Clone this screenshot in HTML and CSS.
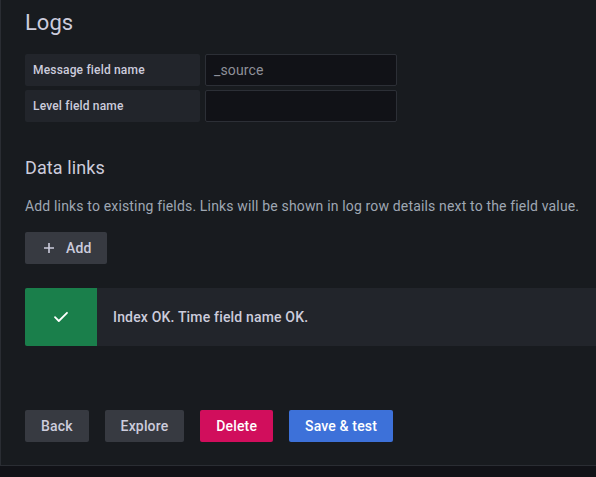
FILE: index.html
```html
<!DOCTYPE html>
<html>
<head>
<meta charset="utf-8">
<link rel="stylesheet" href="styles.css">
</head>
<body>
<div class="panel">
  <h3 class="title">Logs</h3>
  <div class="rows">
    <div class="row">
      <label class="label">Message field name</label>
      <div class="input"><span class="placeholder">_source</span></div>
    </div>
    <div class="row">
      <label class="label">Level field name</label>
      <div class="input"></div>
    </div>
  </div>

  <h4 class="subtitle">Data links</h4>
  <p class="desc">Add links to existing fields. Links will be shown in log row details next to the field value.</p>
  <button class="btn btn-secondary btn-add">
    <svg class="plus" width="12" height="12" viewBox="0 0 12 12"><path d="M6 1v10M1 6h10" stroke="#ccccdc" stroke-width="1.6" fill="none"/></svg>
    <span>Add</span>
  </button>

  <div class="alert">
    <div class="alert-icon">
      <svg width="16" height="12" viewBox="0 0 16 12"><path d="M2 6.2l3.8 3.8L14 1.8" stroke="#ffffff" stroke-width="1.8" fill="none" stroke-linecap="round" stroke-linejoin="round"/></svg>
    </div>
    <div class="alert-text">Index OK. Time field name OK.</div>
  </div>

  <div class="actions">
    <button class="btn btn-secondary">Back</button>
    <button class="btn btn-secondary">Explore</button>
    <button class="btn btn-danger">Delete</button>
    <button class="btn btn-primary">Save &amp; test</button>
  </div>
</div>
</body>
</html>
```

FILE: styles.css
```css
html, body {
  margin: 0;
  padding: 0;
  background: #111217;
  overflow: hidden;
  width: 596px;
  height: 477px;
}
body {
  font-family: Roboto, "Liberation Sans", sans-serif;
  color: #ccccdc;
}
.panel {
  width: 700px;
  height: 466px;
  box-sizing: border-box;
  background: #181b1f;
  border-left: 1px solid #2a2d33;
  border-bottom: 1px solid #2a2d33;
  padding: 0 0 0 24px;
}
.title {
  margin: 0;
  padding-top: 9px;
  font-size: 22px;
  font-weight: 400;
  line-height: 28px;
  height: 45px;
  color: #ccccdc;
}
.rows {
  display: flex;
  flex-direction: column;
  gap: 4px;
}
.row {
  display: flex;
  gap: 5px;
}
.label {
  width: 175px;
  height: 32px;
  box-sizing: border-box;
  background: #22252b;
  border-radius: 2px;
  padding: 0 8px;
  display: flex;
  align-items: center;
  font-size: 12px;
  font-weight: 500;
  letter-spacing: 0.18px;
  color: #ccccdc;
}
.input {
  width: 192px;
  height: 32px;
  box-sizing: border-box;
  background: #111217;
  border: 1px solid #2c2f36;
  border-radius: 2px;
  padding: 0 8px;
  display: flex;
  align-items: center;
  font-size: 14px;
  letter-spacing: 0.15px;
}
.placeholder {
  color: #8e9099;
}
.subtitle {
  margin: 0;
  margin-top: 35px;
  font-size: 18px;
  font-weight: 400;
  line-height: 22px;
  letter-spacing: 0.1px;
  color: #ccccdc;
}
.desc {
  margin: 0;
  margin-top: 17px;
  font-size: 14px;
  line-height: 20px;
  letter-spacing: 0.16px;
  color: #9fa7b3;
}
.btn {
  height: 32px;
  border: none;
  border-radius: 2px;
  padding: 0 16px;
  font-family: Roboto, "Liberation Sans", sans-serif;
  font-size: 14px;
  font-weight: 500;
  letter-spacing: 0.15px;
  display: inline-flex;
  align-items: center;
  gap: 10px;
}
.btn-secondary {
  background: #373a41;
  color: #ccccdc;
}
.btn-danger {
  background: #d10e5c;
  color: #ffffff;
}
.btn-primary {
  background: #3d71d9;
  color: #ffffff;
}
.btn-add {
  margin-top: 16px;
  width: 82px;
  padding: 0 0 1px 18px;
  gap: 11px;
}
.alert {
  margin-top: 24px;
  height: 58px;
  display: flex;
  background: #22252b;
  border-radius: 2px;
}
.alert-icon {
  width: 72px;
  background: #1a7f4b;
  border-radius: 2px 0 0 2px;
  display: flex;
  align-items: center;
  justify-content: center;
}
.alert-text {
  display: flex;
  align-items: center;
  padding-left: 16px;
  font-size: 14px;
  font-weight: 500;
  letter-spacing: 0.17px;
  color: #ccccdc;
}
.actions {
  margin-top: 64px;
  display: flex;
  gap: 16px;
}
```
